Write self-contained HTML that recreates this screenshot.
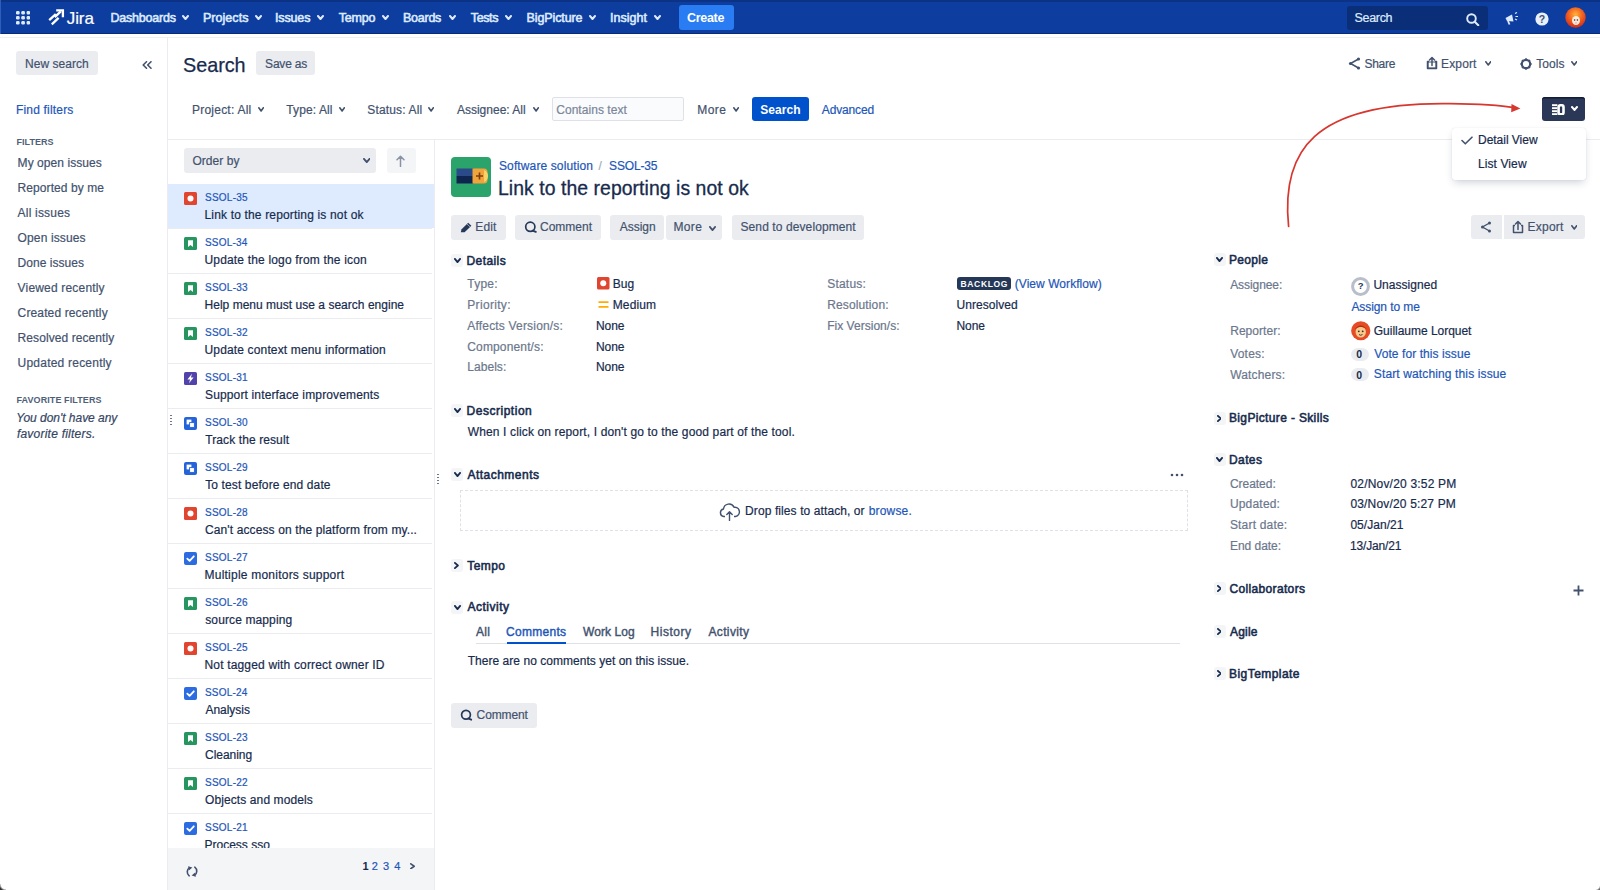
<!DOCTYPE html>
<html><head><meta charset="utf-8"><title>Jira</title>
<style>
html,body{margin:0;padding:0;width:1600px;height:890px;overflow:hidden;background:#fff;}
body{position:relative;font-family:"Liberation Sans", sans-serif;}
.t{position:absolute;white-space:nowrap;font-family:"Liberation Sans", sans-serif;-webkit-text-stroke:0.2px currentColor;}
.r{position:absolute;}
</style></head><body>
<div class="r" style="left:0px;top:0px;width:1600px;height:34px;background:#0D3E9F;"></div>
<div class="r" style="left:0px;top:0px;width:1600px;height:2px;background:#0C3286;"></div>
<div class="r" style="left:0px;top:33px;width:1600px;height:1px;background:#0A2A78;"></div>
<div class="r" style="left:0px;top:37px;width:1600px;height:1px;background:#EFF0F2;"></div>
<svg class="r" style="left:16px;top:10.5px;" width="14" height="14" viewBox="0 0 14 14"><rect x="0.0" y="0.0" width="3.6" height="3.4" rx="1.2" fill="#DEEBFF"/><rect x="5.3" y="0.0" width="3.6" height="3.4" rx="1.2" fill="#DEEBFF"/><rect x="10.6" y="0.0" width="3.6" height="3.4" rx="1.2" fill="#DEEBFF"/><rect x="0.0" y="5.0" width="3.6" height="3.4" rx="1.2" fill="#DEEBFF"/><rect x="5.3" y="5.0" width="3.6" height="3.4" rx="1.2" fill="#DEEBFF"/><rect x="10.6" y="5.0" width="3.6" height="3.4" rx="1.2" fill="#DEEBFF"/><rect x="0.0" y="10.0" width="3.6" height="3.4" rx="1.2" fill="#DEEBFF"/><rect x="5.3" y="10.0" width="3.6" height="3.4" rx="1.2" fill="#DEEBFF"/><rect x="10.6" y="10.0" width="3.6" height="3.4" rx="1.2" fill="#DEEBFF"/></svg>
<svg class="r" style="left:47.5px;top:9px;" width="17" height="17" viewBox="0 0 17 17"><g fill="none" stroke="#FFFFFF" stroke-width="2.3" stroke-linecap="butt"><path d="M1.2 11.2 L7.8 5.2"/><path d="M3.8 15.4 L10.6 8.8"/><path d="M8.2 1.3 H14.9 V8.2"/><path d="M6.8 8.2 L12.8 2.4"/></g></svg>
<span id="t0" class="t" style="left:66.75px;top:10.00px;font-size:17px;line-height:17px;color:#FFFFFF;letter-spacing:-0.083px;">Jira</span>
<span id="t1" class="t" style="left:110.50px;top:12.00px;font-size:12.5px;line-height:12.5px;color:#DEEBFF;-webkit-text-stroke:0.55px currentColor;letter-spacing:-0.211px;">Dashboards</span>
<svg class="r" style="left:182px;top:15px;" width="7" height="5" viewBox="0 0 7 5"><path d="M1.0 1.0 L3.5 4.0 L6.0 1.0" fill="none" stroke="#DEEBFF" stroke-width="2" stroke-linecap="round" stroke-linejoin="round"/></svg>
<span id="t2" class="t" style="left:203.00px;top:12.00px;font-size:12.5px;line-height:12.5px;color:#DEEBFF;-webkit-text-stroke:0.55px currentColor;letter-spacing:0.036px;">Projects</span>
<svg class="r" style="left:255px;top:15px;" width="7" height="5" viewBox="0 0 7 5"><path d="M1.0 1.0 L3.5 4.0 L6.0 1.0" fill="none" stroke="#DEEBFF" stroke-width="2" stroke-linecap="round" stroke-linejoin="round"/></svg>
<span id="t3" class="t" style="left:275.00px;top:12.00px;font-size:12.5px;line-height:12.5px;color:#DEEBFF;-webkit-text-stroke:0.55px currentColor;letter-spacing:-0.150px;">Issues</span>
<svg class="r" style="left:317px;top:15px;" width="7" height="5" viewBox="0 0 7 5"><path d="M1.0 1.0 L3.5 4.0 L6.0 1.0" fill="none" stroke="#DEEBFF" stroke-width="2" stroke-linecap="round" stroke-linejoin="round"/></svg>
<span id="t4" class="t" style="left:338.75px;top:12.00px;font-size:12.5px;line-height:12.5px;color:#DEEBFF;-webkit-text-stroke:0.55px currentColor;letter-spacing:-0.188px;">Tempo</span>
<svg class="r" style="left:382px;top:15px;" width="7" height="5" viewBox="0 0 7 5"><path d="M1.0 1.0 L3.5 4.0 L6.0 1.0" fill="none" stroke="#DEEBFF" stroke-width="2" stroke-linecap="round" stroke-linejoin="round"/></svg>
<span id="t5" class="t" style="left:403.00px;top:12.00px;font-size:12.5px;line-height:12.5px;color:#DEEBFF;-webkit-text-stroke:0.55px currentColor;letter-spacing:-0.250px;">Boards</span>
<svg class="r" style="left:449px;top:15px;" width="7" height="5" viewBox="0 0 7 5"><path d="M1.0 1.0 L3.5 4.0 L6.0 1.0" fill="none" stroke="#DEEBFF" stroke-width="2" stroke-linecap="round" stroke-linejoin="round"/></svg>
<span id="t6" class="t" style="left:470.75px;top:12.00px;font-size:12.5px;line-height:12.5px;color:#DEEBFF;-webkit-text-stroke:0.55px currentColor;letter-spacing:-0.375px;">Tests</span>
<svg class="r" style="left:505px;top:15px;" width="7" height="5" viewBox="0 0 7 5"><path d="M1.0 1.0 L3.5 4.0 L6.0 1.0" fill="none" stroke="#DEEBFF" stroke-width="2" stroke-linecap="round" stroke-linejoin="round"/></svg>
<span id="t7" class="t" style="left:526.50px;top:12.00px;font-size:12.5px;line-height:12.5px;color:#DEEBFF;-webkit-text-stroke:0.55px currentColor;letter-spacing:-0.111px;">BigPicture</span>
<svg class="r" style="left:589px;top:15px;" width="7" height="5" viewBox="0 0 7 5"><path d="M1.0 1.0 L3.5 4.0 L6.0 1.0" fill="none" stroke="#DEEBFF" stroke-width="2" stroke-linecap="round" stroke-linejoin="round"/></svg>
<span id="t8" class="t" style="left:610.00px;top:12.00px;font-size:12.5px;line-height:12.5px;color:#DEEBFF;-webkit-text-stroke:0.55px currentColor;letter-spacing:0.042px;">Insight</span>
<svg class="r" style="left:654px;top:15px;" width="7" height="5" viewBox="0 0 7 5"><path d="M1.0 1.0 L3.5 4.0 L6.0 1.0" fill="none" stroke="#DEEBFF" stroke-width="2" stroke-linecap="round" stroke-linejoin="round"/></svg>
<div class="r" style="left:679px;top:5px;width:55px;height:25px;background:#2A7CF2;border-radius:3px;"></div>
<span id="t9" class="t" style="left:687.00px;top:12.00px;font-size:12.5px;line-height:12.5px;color:#FFFFFF;font-weight:700;-webkit-text-stroke:0;letter-spacing:-0.300px;">Create</span>
<div class="r" style="left:1347px;top:5.5px;width:141px;height:24.5px;background:#0A2F78;border-radius:3px;"></div>
<span id="t10" class="t" style="left:1354.50px;top:12.00px;font-size:12.5px;line-height:12.5px;color:#DEEBFF;letter-spacing:-0.310px;">Search</span>
<svg class="r" style="left:1466px;top:13px;" width="14" height="13" viewBox="0 0 14 13"><circle cx="5.5" cy="5.5" r="4.3" fill="none" stroke="#DEEBFF" stroke-width="1.9"/><path d="M8.7 8.7 L12.3 12.3" stroke="#DEEBFF" stroke-width="2" stroke-linecap="round"/></svg>
<svg class="r" style="left:1504px;top:12px;" width="15" height="13" viewBox="0 0 15 13"><path d="M1.5 6 L8 2.5 L9.5 9.5 L3 9 Z" fill="#DEEBFF"/><path d="M4 9 L5.5 12.5" stroke="#DEEBFF" stroke-width="1.8"/><path d="M11 1.5 L13 0.5 M11.5 4.5 L14 4.5 M11 7 L13 8" stroke="#DEEBFF" stroke-width="1.2"/></svg>
<svg class="r" style="left:1534.5px;top:11.5px;" width="14" height="14" viewBox="0 0 14 14"><circle cx="7" cy="7" r="6.6" fill="#E6F0FF"/><text x="7" y="11" font-family="Liberation Sans" font-size="10.5" font-weight="700" text-anchor="middle" fill="#42526E">?</text></svg>
<svg class="r" style="left:1564.5px;top:7px;" width="21" height="21" viewBox="0 0 21 21"><defs><radialGradient id="av1" cx="0.5" cy="0.35" r="0.6"><stop offset="0" stop-color="#FFB43A"/><stop offset="0.55" stop-color="#F2641F"/><stop offset="1" stop-color="#D8351C"/></radialGradient></defs><circle cx="10.5" cy="10.5" r="10.2" fill="url(#av1)"/><ellipse cx="11" cy="13.5" rx="4" ry="4.6" fill="#FBE9DA"/><circle cx="9.6" cy="13" r="0.8" fill="#3A2A20"/><circle cx="12.4" cy="13" r="0.8" fill="#3A2A20"/><path d="M10.2 15.8 Q11 16.8 11.8 15.8" fill="#7A2A10"/></svg>
<div class="r" style="left:167px;top:38px;width:1px;height:852px;background:#EBECF0;"></div>
<div class="r" style="left:16px;top:51px;width:82px;height:24px;background:#EBECF0;border-radius:3px;"></div>
<span id="t11" class="t" style="left:25.00px;top:58.00px;font-size:12px;line-height:12px;color:#42526E;letter-spacing:0.028px;">New search</span>
<svg class="r" style="left:142px;top:61px;" width="10" height="8" viewBox="0 0 10 8"><path d="M4.5 0.8 L1.2 4 L4.5 7.2 M9 0.8 L5.7 4 L9 7.2" fill="none" stroke="#42526E" stroke-width="1.6" stroke-linecap="round" stroke-linejoin="round"/></svg>
<span id="t12" class="t" style="left:16.00px;top:104.00px;font-size:12px;line-height:12px;color:#1E56B8;letter-spacing:0.182px;">Find filters</span>
<span id="t13" class="t" style="left:16.50px;top:138.00px;font-size:9px;line-height:9px;color:#505F79;font-weight:700;-webkit-text-stroke:0;letter-spacing:0.033px;">FILTERS</span>
<span id="t14" class="t" style="left:17.60px;top:157.00px;font-size:12px;line-height:12px;color:#42526E;letter-spacing:0.062px;">My open issues</span>
<span id="t15" class="t" style="left:17.60px;top:182.00px;font-size:12px;line-height:12px;color:#42526E;letter-spacing:0.077px;">Reported by me</span>
<span id="t16" class="t" style="left:17.60px;top:207.00px;font-size:12px;line-height:12px;color:#42526E;letter-spacing:0.194px;">All issues</span>
<span id="t17" class="t" style="left:17.60px;top:232.00px;font-size:12px;line-height:12px;color:#42526E;letter-spacing:0.125px;">Open issues</span>
<span id="t18" class="t" style="left:17.60px;top:257.00px;font-size:12px;line-height:12px;color:#42526E;letter-spacing:0.025px;">Done issues</span>
<span id="t19" class="t" style="left:17.60px;top:282.00px;font-size:12px;line-height:12px;color:#42526E;letter-spacing:0.179px;">Viewed recently</span>
<span id="t20" class="t" style="left:17.60px;top:307.00px;font-size:12px;line-height:12px;color:#42526E;letter-spacing:0.133px;">Created recently</span>
<span id="t21" class="t" style="left:17.60px;top:332.00px;font-size:12px;line-height:12px;color:#42526E;letter-spacing:0.078px;">Resolved recently</span>
<span id="t22" class="t" style="left:17.60px;top:357.00px;font-size:12px;line-height:12px;color:#42526E;letter-spacing:0.217px;">Updated recently</span>
<span id="t23" class="t" style="left:16.50px;top:396.00px;font-size:9px;line-height:9px;color:#505F79;font-weight:700;-webkit-text-stroke:0;letter-spacing:0.087px;">FAVORITE FILTERS</span>
<span id="t24" class="t" style="left:16.15px;top:412.00px;font-size:12px;line-height:12px;color:#344563;font-style:italic;letter-spacing:-0.029px;">You don't have any</span>
<span id="t25" class="t" style="left:16.90px;top:428.00px;font-size:12px;line-height:12px;color:#344563;font-style:italic;letter-spacing:0.228px;">favorite filters.</span>
<div class="r" style="left:170.3px;top:415px;width:1.4px;height:1.4px;background:#6B778C;"></div>
<div class="r" style="left:170.3px;top:418px;width:1.4px;height:1.4px;background:#6B778C;"></div>
<div class="r" style="left:170.3px;top:421px;width:1.4px;height:1.4px;background:#6B778C;"></div>
<div class="r" style="left:170.3px;top:424px;width:1.4px;height:1.4px;background:#6B778C;"></div>
<span id="t26" class="t" style="left:183.00px;top:56.00px;font-size:19.8px;line-height:19.8px;color:#172B4D;letter-spacing:-0.020px;-webkit-text-stroke:0.25px #172B4D;">Search</span>
<div class="r" style="left:256px;top:51px;width:59px;height:24px;background:#EBECF0;border-radius:3px;"></div>
<span id="t27" class="t" style="left:265.10px;top:58.00px;font-size:12px;line-height:12px;color:#42526E;letter-spacing:-0.200px;">Save as</span>
<svg class="r" style="left:1348px;top:57px;" width="13" height="13" viewBox="0 0 13 13"><g fill="none" stroke="#42526E" stroke-width="1.5"><path d="M10.5 2 L2.5 6.5 L10.5 11"/></g><circle cx="10.5" cy="2" r="1.6" fill="#42526E"/><circle cx="2.5" cy="6.5" r="1.6" fill="#42526E"/><circle cx="10.5" cy="11" r="1.6" fill="#42526E"/></svg>
<span id="t28" class="t" style="left:1364.40px;top:58.00px;font-size:12px;line-height:12px;color:#42526E;letter-spacing:-0.250px;">Share</span>
<svg class="r" style="left:1426px;top:56px;" width="12" height="14" viewBox="0 0 12 14"><path d="M3 5.5 L1.5 5.5 L1.5 12.5 L10.5 12.5 L10.5 5.5 L9 5.5" fill="none" stroke="#42526E" stroke-width="1.5" stroke-linejoin="round"/><path d="M6 9.5 L6 1.5 M3.5 4 L6 1.5 L8.5 4" fill="none" stroke="#42526E" stroke-width="1.5" stroke-linecap="round" stroke-linejoin="round"/><path d="M2 6 L10 6 L10 12 L2 12Z" fill="none" stroke="#42526E" stroke-width="1.2"/></svg>
<span id="t29" class="t" style="left:1441.00px;top:58.00px;font-size:12px;line-height:12px;color:#42526E;letter-spacing:0.150px;">Export</span>
<svg class="r" style="left:1484.5px;top:61px;" width="6.5" height="4.8" viewBox="0 0 6.5 4.8"><path d="M0.8 0.8 L3.25 4.0 L5.7 0.8" fill="none" stroke="#42526E" stroke-width="1.6" stroke-linecap="round" stroke-linejoin="round"/></svg>
<svg class="r" style="left:1519.5px;top:58px;" width="12" height="12" viewBox="0 0 12 12"><circle cx="6" cy="6" r="4.2" fill="none" stroke="#42526E" stroke-width="2.2"/><g stroke="#42526E" stroke-width="1.6"><path d="M6 0.3 V2.5 M6 9.5 V11.7 M0.3 6 H2.5 M9.5 6 H11.7 M2 2 L3.4 3.4 M8.6 8.6 L10 10 M2 10 L3.4 8.6 M8.6 3.4 L10 2"/></g></svg>
<span id="t30" class="t" style="left:1536.35px;top:58.00px;font-size:12px;line-height:12px;color:#42526E;letter-spacing:0.013px;">Tools</span>
<svg class="r" style="left:1570.8px;top:61px;" width="6.5" height="4.8" viewBox="0 0 6.5 4.8"><path d="M0.8 0.8 L3.25 4.0 L5.7 0.8" fill="none" stroke="#42526E" stroke-width="1.6" stroke-linecap="round" stroke-linejoin="round"/></svg>
<span id="t31" class="t" style="left:191.90px;top:104.00px;font-size:12px;line-height:12px;color:#42526E;letter-spacing:0.245px;">Project: All</span>
<svg class="r" style="left:258px;top:107px;" width="6.2" height="4.8" viewBox="0 0 6.2 4.8"><path d="M0.8 0.8 L3.1 4.0 L5.4 0.8" fill="none" stroke="#42526E" stroke-width="1.6" stroke-linecap="round" stroke-linejoin="round"/></svg>
<span id="t32" class="t" style="left:286.35px;top:104.00px;font-size:12px;line-height:12px;color:#42526E;letter-spacing:0.094px;">Type: All</span>
<svg class="r" style="left:339px;top:107px;" width="6.2" height="4.8" viewBox="0 0 6.2 4.8"><path d="M0.8 0.8 L3.1 4.0 L5.4 0.8" fill="none" stroke="#42526E" stroke-width="1.6" stroke-linecap="round" stroke-linejoin="round"/></svg>
<span id="t33" class="t" style="left:367.30px;top:104.00px;font-size:12px;line-height:12px;color:#42526E;letter-spacing:0.145px;">Status: All</span>
<svg class="r" style="left:428px;top:107px;" width="6.2" height="4.8" viewBox="0 0 6.2 4.8"><path d="M0.8 0.8 L3.1 4.0 L5.4 0.8" fill="none" stroke="#42526E" stroke-width="1.6" stroke-linecap="round" stroke-linejoin="round"/></svg>
<span id="t34" class="t" style="left:456.90px;top:104.00px;font-size:12px;line-height:12px;color:#42526E;letter-spacing:0.008px;">Assignee: All</span>
<svg class="r" style="left:532.5px;top:107px;" width="6.2" height="4.8" viewBox="0 0 6.2 4.8"><path d="M0.8 0.8 L3.1 4.0 L5.4 0.8" fill="none" stroke="#42526E" stroke-width="1.6" stroke-linecap="round" stroke-linejoin="round"/></svg>
<div class="r" style="left:552px;top:97px;width:132px;height:24px;background:#FAFBFC;border:1px solid #DFE1E6;box-sizing:border-box;border-radius:2px;"></div>
<span id="t35" class="t" style="left:556.20px;top:104.00px;font-size:12px;line-height:12px;color:#7A869A;letter-spacing:0.050px;">Contains text</span>
<span id="t36" class="t" style="left:697.30px;top:104.00px;font-size:12px;line-height:12px;color:#42526E;letter-spacing:0.433px;">More</span>
<svg class="r" style="left:733px;top:107px;" width="6.2" height="4.8" viewBox="0 0 6.2 4.8"><path d="M0.8 0.8 L3.1 4.0 L5.4 0.8" fill="none" stroke="#42526E" stroke-width="1.6" stroke-linecap="round" stroke-linejoin="round"/></svg>
<div class="r" style="left:752px;top:97px;width:57px;height:24px;background:#0052CC;border-radius:3px;"></div>
<span id="t37" class="t" style="left:760.30px;top:104.00px;font-size:12px;line-height:12px;color:#FFFFFF;font-weight:700;-webkit-text-stroke:0;letter-spacing:0.050px;">Search</span>
<span id="t38" class="t" style="left:821.80px;top:104.00px;font-size:12px;line-height:12px;color:#1E56B8;letter-spacing:-0.150px;">Advanced</span>
<div class="r" style="left:168px;top:138.5px;width:1432px;height:1px;background:#EBECF0;"></div>
<div class="r" style="left:184px;top:148px;width:192px;height:24.5px;background:#EBECF0;border-radius:3px;"></div>
<span id="t39" class="t" style="left:192.40px;top:155.00px;font-size:12px;line-height:12px;color:#42526E;letter-spacing:0.064px;">Order by</span>
<svg class="r" style="left:362.5px;top:158px;" width="7.5" height="5" viewBox="0 0 7.5 5"><path d="M0.95 0.95 L3.75 4.05 L6.55 0.95" fill="none" stroke="#42526E" stroke-width="1.9" stroke-linecap="round" stroke-linejoin="round"/></svg>
<div class="r" style="left:386.5px;top:148px;width:29.5px;height:24.5px;background:#F4F5F7;border-radius:3px;"></div>
<svg class="r" style="left:396px;top:155px;" width="9" height="12" viewBox="0 0 9 12"><path d="M4.5 11.5 V1.5 M1 4.8 L4.5 1.3 L8 4.8" fill="none" stroke="#8993A4" stroke-width="1.5" stroke-linecap="round" stroke-linejoin="round"/></svg>
<div class="r" style="left:433.5px;top:139px;width:1px;height:751px;background:#EBECF0;"></div>
<div class="r" style="left:168px;top:183.9px;width:265.5px;height:44.1px;background:#DEEBFF;"></div>
<svg class="r" style="left:184px;top:192.1px;" width="13" height="13" viewBox="0 0 13 13"><rect x="0" y="0" width="13" height="13" rx="1.5" fill="#E2452F"/><circle cx="6.5" cy="6.5" r="3" fill="#fff"/></svg>
<span id="t40" class="t" style="left:205.00px;top:193.00px;font-size:10px;line-height:10px;color:#1E56B8;letter-spacing:0.242px;">SSOL-35</span>
<span id="t41" class="t" style="left:204.50px;top:209.00px;font-size:12px;line-height:12px;color:#172B4D;letter-spacing:0.163px;">Link to the reporting is not ok</span>
<div class="r" style="left:168px;top:228.4px;width:264px;height:1px;background:#EBECF0;"></div>
<svg class="r" style="left:184px;top:237.1px;" width="13" height="13" viewBox="0 0 13 13"><rect x="0" y="0" width="13" height="13" rx="1.5" fill="#27955F"/><path d="M4 3.2 H9 V10 L6.5 8 L4 10 Z" fill="#fff"/></svg>
<span id="t42" class="t" style="left:205.00px;top:238.00px;font-size:10px;line-height:10px;color:#1E56B8;letter-spacing:0.200px;">SSOL-34</span>
<span id="t43" class="t" style="left:204.50px;top:254.00px;font-size:12px;line-height:12px;color:#172B4D;letter-spacing:0.170px;">Update the logo from the icon</span>
<div class="r" style="left:168px;top:273.4px;width:264px;height:1px;background:#EBECF0;"></div>
<svg class="r" style="left:184px;top:282.1px;" width="13" height="13" viewBox="0 0 13 13"><rect x="0" y="0" width="13" height="13" rx="1.5" fill="#27955F"/><path d="M4 3.2 H9 V10 L6.5 8 L4 10 Z" fill="#fff"/></svg>
<span id="t44" class="t" style="left:205.00px;top:283.00px;font-size:10px;line-height:10px;color:#1E56B8;letter-spacing:0.242px;">SSOL-33</span>
<span id="t45" class="t" style="left:204.50px;top:299.00px;font-size:12px;line-height:12px;color:#172B4D;letter-spacing:0.023px;">Help menu must use a search engine</span>
<div class="r" style="left:168px;top:318.4px;width:264px;height:1px;background:#EBECF0;"></div>
<svg class="r" style="left:184px;top:327.1px;" width="13" height="13" viewBox="0 0 13 13"><rect x="0" y="0" width="13" height="13" rx="1.5" fill="#27955F"/><path d="M4 3.2 H9 V10 L6.5 8 L4 10 Z" fill="#fff"/></svg>
<span id="t46" class="t" style="left:205.00px;top:328.00px;font-size:10px;line-height:10px;color:#1E56B8;letter-spacing:0.242px;">SSOL-32</span>
<span id="t47" class="t" style="left:204.50px;top:344.00px;font-size:12px;line-height:12px;color:#172B4D;letter-spacing:0.150px;">Update context menu information</span>
<div class="r" style="left:168px;top:363.4px;width:264px;height:1px;background:#EBECF0;"></div>
<svg class="r" style="left:184px;top:372.1px;" width="13" height="13" viewBox="0 0 13 13"><rect x="0" y="0" width="13" height="13" rx="1.6" fill="#5243AA"/><path d="M8 1.8 L3.4 7.4 H6.1 L5 11.2 L9.6 5.6 H6.9 Z" fill="#fff"/></svg>
<span id="t48" class="t" style="left:205.00px;top:373.00px;font-size:10px;line-height:10px;color:#1E56B8;letter-spacing:0.242px;">SSOL-31</span>
<span id="t49" class="t" style="left:205.00px;top:389.00px;font-size:12px;line-height:12px;color:#172B4D;letter-spacing:0.147px;">Support interface improvements</span>
<div class="r" style="left:168px;top:408.4px;width:264px;height:1px;background:#EBECF0;"></div>
<svg class="r" style="left:184px;top:417.1px;" width="13" height="13" viewBox="0 0 13 13"><rect x="0" y="0" width="13" height="13" rx="2" fill="#2563D9"/><rect x="2.6" y="2.6" width="4.8" height="4.8" fill="#fff"/><rect x="5.6" y="5.6" width="4.8" height="4.8" fill="#fff" stroke="#2563D9" stroke-width="0.9"/></svg>
<span id="t50" class="t" style="left:205.00px;top:418.00px;font-size:10px;line-height:10px;color:#1E56B8;letter-spacing:0.242px;">SSOL-30</span>
<span id="t51" class="t" style="left:205.25px;top:434.00px;font-size:12px;line-height:12px;color:#172B4D;letter-spacing:0.100px;">Track the result</span>
<div class="r" style="left:168px;top:453.4px;width:264px;height:1px;background:#EBECF0;"></div>
<svg class="r" style="left:184px;top:462.1px;" width="13" height="13" viewBox="0 0 13 13"><rect x="0" y="0" width="13" height="13" rx="2" fill="#2563D9"/><rect x="2.6" y="2.6" width="4.8" height="4.8" fill="#fff"/><rect x="5.6" y="5.6" width="4.8" height="4.8" fill="#fff" stroke="#2563D9" stroke-width="0.9"/></svg>
<span id="t52" class="t" style="left:205.00px;top:463.00px;font-size:10px;line-height:10px;color:#1E56B8;letter-spacing:0.242px;">SSOL-29</span>
<span id="t53" class="t" style="left:205.25px;top:479.00px;font-size:12px;line-height:12px;color:#172B4D;letter-spacing:0.114px;">To test before end date</span>
<div class="r" style="left:168px;top:498.4px;width:264px;height:1px;background:#EBECF0;"></div>
<svg class="r" style="left:184px;top:507.1px;" width="13" height="13" viewBox="0 0 13 13"><rect x="0" y="0" width="13" height="13" rx="1.5" fill="#E2452F"/><circle cx="6.5" cy="6.5" r="3" fill="#fff"/></svg>
<span id="t54" class="t" style="left:205.00px;top:508.00px;font-size:10px;line-height:10px;color:#1E56B8;letter-spacing:0.242px;">SSOL-28</span>
<span id="t55" class="t" style="left:205.00px;top:524.00px;font-size:12px;line-height:12px;color:#172B4D;letter-spacing:0.118px;">Can't access on the platform from my...</span>
<div class="r" style="left:168px;top:543.4px;width:264px;height:1px;background:#EBECF0;"></div>
<svg class="r" style="left:184px;top:552.1px;" width="13" height="13" viewBox="0 0 13 13"><rect x="0" y="0" width="13" height="13" rx="2" fill="#2C6BE0"/><path d="M3.3 6.6 L5.6 8.9 L9.8 4.3" fill="none" stroke="#fff" stroke-width="1.8" stroke-linecap="round" stroke-linejoin="round"/></svg>
<span id="t56" class="t" style="left:205.00px;top:553.00px;font-size:10px;line-height:10px;color:#1E56B8;letter-spacing:0.242px;">SSOL-27</span>
<span id="t57" class="t" style="left:204.50px;top:569.00px;font-size:12px;line-height:12px;color:#172B4D;letter-spacing:0.229px;">Multiple monitors support</span>
<div class="r" style="left:168px;top:588.4px;width:264px;height:1px;background:#EBECF0;"></div>
<svg class="r" style="left:184px;top:597.1px;" width="13" height="13" viewBox="0 0 13 13"><rect x="0" y="0" width="13" height="13" rx="1.5" fill="#27955F"/><path d="M4 3.2 H9 V10 L6.5 8 L4 10 Z" fill="#fff"/></svg>
<span id="t58" class="t" style="left:205.00px;top:598.00px;font-size:10px;line-height:10px;color:#1E56B8;letter-spacing:0.242px;">SSOL-26</span>
<span id="t59" class="t" style="left:205.25px;top:614.00px;font-size:12px;line-height:12px;color:#172B4D;letter-spacing:0.115px;">source mapping</span>
<div class="r" style="left:168px;top:633.4px;width:264px;height:1px;background:#EBECF0;"></div>
<svg class="r" style="left:184px;top:642.1px;" width="13" height="13" viewBox="0 0 13 13"><rect x="0" y="0" width="13" height="13" rx="1.5" fill="#E2452F"/><circle cx="6.5" cy="6.5" r="3" fill="#fff"/></svg>
<span id="t60" class="t" style="left:205.00px;top:643.00px;font-size:10px;line-height:10px;color:#1E56B8;letter-spacing:0.242px;">SSOL-25</span>
<span id="t61" class="t" style="left:204.50px;top:659.00px;font-size:12px;line-height:12px;color:#172B4D;letter-spacing:0.169px;">Not tagged with correct owner ID</span>
<div class="r" style="left:168px;top:678.4px;width:264px;height:1px;background:#EBECF0;"></div>
<svg class="r" style="left:184px;top:687.1px;" width="13" height="13" viewBox="0 0 13 13"><rect x="0" y="0" width="13" height="13" rx="2" fill="#2C6BE0"/><path d="M3.3 6.6 L5.6 8.9 L9.8 4.3" fill="none" stroke="#fff" stroke-width="1.8" stroke-linecap="round" stroke-linejoin="round"/></svg>
<span id="t62" class="t" style="left:205.00px;top:688.00px;font-size:10px;line-height:10px;color:#1E56B8;letter-spacing:0.200px;">SSOL-24</span>
<span id="t63" class="t" style="left:205.50px;top:704.00px;font-size:12px;line-height:12px;color:#172B4D;letter-spacing:-0.036px;">Analysis</span>
<div class="r" style="left:168px;top:723.4px;width:264px;height:1px;background:#EBECF0;"></div>
<svg class="r" style="left:184px;top:732.1px;" width="13" height="13" viewBox="0 0 13 13"><rect x="0" y="0" width="13" height="13" rx="1.5" fill="#27955F"/><path d="M4 3.2 H9 V10 L6.5 8 L4 10 Z" fill="#fff"/></svg>
<span id="t64" class="t" style="left:205.00px;top:733.00px;font-size:10px;line-height:10px;color:#1E56B8;letter-spacing:0.242px;">SSOL-23</span>
<span id="t65" class="t" style="left:205.00px;top:749.00px;font-size:12px;line-height:12px;color:#172B4D;letter-spacing:-0.036px;">Cleaning</span>
<div class="r" style="left:168px;top:768.4px;width:264px;height:1px;background:#EBECF0;"></div>
<svg class="r" style="left:184px;top:777.1px;" width="13" height="13" viewBox="0 0 13 13"><rect x="0" y="0" width="13" height="13" rx="1.5" fill="#27955F"/><path d="M4 3.2 H9 V10 L6.5 8 L4 10 Z" fill="#fff"/></svg>
<span id="t66" class="t" style="left:205.00px;top:778.00px;font-size:10px;line-height:10px;color:#1E56B8;letter-spacing:0.242px;">SSOL-22</span>
<span id="t67" class="t" style="left:205.00px;top:794.00px;font-size:12px;line-height:12px;color:#172B4D;letter-spacing:0.103px;">Objects and models</span>
<div class="r" style="left:168px;top:813.4px;width:264px;height:1px;background:#EBECF0;"></div>
<svg class="r" style="left:184px;top:822.1px;" width="13" height="13" viewBox="0 0 13 13"><rect x="0" y="0" width="13" height="13" rx="2" fill="#2C6BE0"/><path d="M3.3 6.6 L5.6 8.9 L9.8 4.3" fill="none" stroke="#fff" stroke-width="1.8" stroke-linecap="round" stroke-linejoin="round"/></svg>
<span id="t68" class="t" style="left:205.00px;top:823.00px;font-size:10px;line-height:10px;color:#1E56B8;letter-spacing:0.242px;">SSOL-21</span>
<span id="t69" class="t" style="left:204.50px;top:839.00px;font-size:12px;line-height:12px;color:#172B4D;">Process sso</span>
<div class="r" style="left:168px;top:848.3px;width:265.5px;height:42px;background:#F4F5F7;"></div>
<svg class="r" style="left:184.5px;top:865px;" width="14" height="13" viewBox="0 0 14 13"><g fill="none" stroke="#42526E" stroke-width="1.6" stroke-linecap="round"><path d="M4.2 10.8 A5 5 0 0 1 4.6 2.6"/><path d="M9.8 2.2 A5 5 0 0 1 9.4 10.4"/></g><path d="M3 1.2 L7.4 2.6 L4.2 5.2Z M11 11.8 L6.6 10.4 L9.8 7.8Z" fill="#42526E"/></svg>
<span id="t70" class="t" style="left:362.55px;top:861.00px;font-size:11px;line-height:11px;color:#172B4D;font-weight:700;-webkit-text-stroke:0;letter-spacing:-0.800px;">1</span>
<span id="t71" class="t" style="left:371.70px;top:861.00px;font-size:11px;line-height:11px;color:#1E56B8;">2</span>
<span id="t72" class="t" style="left:383.10px;top:861.00px;font-size:11px;line-height:11px;color:#1E56B8;">3</span>
<span id="t73" class="t" style="left:394.25px;top:861.00px;font-size:11px;line-height:11px;color:#1E56B8;">4</span>
<svg class="r" style="left:409.5px;top:862.5px;" width="5" height="6.5" viewBox="0 0 5 6.5"><path d="M0.8 0.8 L4.2 3.25 L0.8 5.7" fill="none" stroke="#42526E" stroke-width="1.6" stroke-linecap="round" stroke-linejoin="round"/></svg>
<svg class="r" style="left:450.5px;top:157px;" width="40" height="40" viewBox="0 0 40 40"><rect x="0" y="0" width="40" height="40" rx="4" fill="#2AA46B"/><rect x="5.5" y="11.5" width="17" height="7.5" fill="#2A4A8A"/><rect x="5.5" y="19" width="17" height="7.5" fill="#0E2550"/><path d="M21.5 11.5 H33 A3.5 3.5 0 0 1 36.5 15 V23 A3.5 3.5 0 0 1 33 26.5 H21.5 Z" fill="#F2A33A"/><path d="M33 13 A6.5 6.5 0 0 1 33 25" fill="#F9D26B"/><path d="M28.5 15.5 V22.5 M25 19 H32" stroke="#7A3E10" stroke-width="1.6"/></svg>
<span id="t74" class="t" style="left:499.00px;top:160.00px;font-size:12px;line-height:12px;color:#1E56B8;letter-spacing:0.116px;">Software solution</span>
<span id="t75" class="t" style="left:598.50px;top:160.00px;font-size:12px;line-height:12px;color:#A5ADBA;">/</span>
<span id="t76" class="t" style="left:609.10px;top:160.00px;font-size:12px;line-height:12px;color:#1E56B8;letter-spacing:-0.183px;">SSOL-35</span>
<span id="t77" class="t" style="left:498.00px;top:179.00px;font-size:19.4px;line-height:19.4px;color:#172B4D;letter-spacing:0.058px;-webkit-text-stroke:0.3px #172B4D;">Link to the reporting is not ok</span>
<div class="r" style="left:450.6px;top:214.5px;width:55.4px;height:25.0px;background:#EBECF0;border-radius:3px;"></div>
<div class="r" style="left:515px;top:214.5px;width:85.6px;height:25.0px;background:#EBECF0;border-radius:3px;"></div>
<div class="r" style="left:610.2px;top:214.5px;width:53.5px;height:25.0px;background:#EBECF0;border-radius:3px;"></div>
<div class="r" style="left:665.9px;top:214.5px;width:56.3px;height:25.0px;background:#EBECF0;border-radius:3px;"></div>
<div class="r" style="left:731.5px;top:214.5px;width:132.5px;height:25.0px;background:#EBECF0;border-radius:3px;"></div>
<svg class="r" style="left:460px;top:221.5px;" width="13" height="11" viewBox="0 0 13 11"><path d="M0.8 10.2 L1.6 7.2 L8.2 0.8 L11.4 3.8 L4.6 10.2 Z" fill="#253858"/><path d="M7 2 L10.2 5" stroke="#EBECF0" stroke-width="0.6"/></svg>
<span id="t78" class="t" style="left:475.30px;top:221.00px;font-size:12px;line-height:12px;color:#42526E;letter-spacing:0.083px;">Edit</span>
<svg class="r" style="left:523.5px;top:220.5px;" width="14" height="12" viewBox="0 0 14 12"><circle cx="6.3" cy="5.8" r="4.6" fill="none" stroke="#253858" stroke-width="1.7"/><path d="M8.6 9.6 L11.8 10.9" stroke="#253858" stroke-width="1.8" stroke-linecap="round"/></svg>
<span id="t79" class="t" style="left:540.00px;top:221.00px;font-size:12px;line-height:12px;color:#42526E;">Comment</span>
<span id="t80" class="t" style="left:619.75px;top:221.00px;font-size:12px;line-height:12px;color:#42526E;letter-spacing:-0.040px;">Assign</span>
<span id="t81" class="t" style="left:673.40px;top:221.00px;font-size:12px;line-height:12px;color:#42526E;letter-spacing:0.400px;">More</span>
<svg class="r" style="left:708.8px;top:225.5px;" width="7" height="5" viewBox="0 0 7 5"><path d="M0.85 0.85 L3.5 4.15 L6.15 0.85" fill="none" stroke="#42526E" stroke-width="1.7" stroke-linecap="round" stroke-linejoin="round"/></svg>
<span id="t82" class="t" style="left:740.50px;top:221.00px;font-size:12px;line-height:12px;color:#42526E;letter-spacing:0.097px;">Send to development</span>
<div class="r" style="left:451.0px;top:253.60000000000002px;width:12px;height:13px;background:#F4F5F7;border-radius:3px;"></div>
<svg class="r" style="left:453.5px;top:257.6px;" width="7" height="5" viewBox="0 0 7 5"><path d="M0.9 0.9 L3.5 4.1 L6.1 0.9" fill="none" stroke="#172B4D" stroke-width="1.8" stroke-linecap="round" stroke-linejoin="round"/></svg>
<span id="t83" class="t" style="left:466.50px;top:255.00px;font-size:12px;line-height:12px;color:#172B4D;-webkit-text-stroke:0.55px currentColor;letter-spacing:0.408px;">Details</span>
<span id="t84" class="t" style="left:467.30px;top:278.00px;font-size:12px;line-height:12px;color:#6B778C;letter-spacing:0.212px;">Type:</span>
<span id="t85" class="t" style="left:467.30px;top:299.00px;font-size:12px;line-height:12px;color:#6B778C;letter-spacing:0.312px;">Priority:</span>
<span id="t86" class="t" style="left:467.30px;top:320.00px;font-size:12px;line-height:12px;color:#6B778C;letter-spacing:0.182px;">Affects Version/s:</span>
<span id="t87" class="t" style="left:467.30px;top:341.00px;font-size:12px;line-height:12px;color:#6B778C;letter-spacing:0.141px;">Component/s:</span>
<span id="t88" class="t" style="left:467.30px;top:361.00px;font-size:12px;line-height:12px;color:#6B778C;letter-spacing:0.042px;">Labels:</span>
<svg class="r" style="left:597px;top:277.2px;" width="12.5" height="12.5" viewBox="0 0 12.5 12.5"><rect x="0" y="0" width="12.5" height="12.5" rx="1.5" fill="#E2452F"/><circle cx="6.25" cy="6.25" r="3" fill="#fff"/></svg>
<span id="t89" class="t" style="left:612.70px;top:278.00px;font-size:12px;line-height:12px;color:#172B4D;letter-spacing:0.025px;">Bug</span>
<svg class="r" style="left:597.5px;top:301px;" width="11" height="7" viewBox="0 0 11 7"><path d="M0.5 1.2 H10.5 M0.5 5.8 H10.5" stroke="#FFAB00" stroke-width="1.7"/></svg>
<span id="t90" class="t" style="left:612.70px;top:299.00px;font-size:12px;line-height:12px;color:#172B4D;letter-spacing:0.140px;">Medium</span>
<span id="t91" class="t" style="left:596.00px;top:320.00px;font-size:12px;line-height:12px;color:#172B4D;letter-spacing:-0.083px;">None</span>
<span id="t92" class="t" style="left:596.00px;top:341.00px;font-size:12px;line-height:12px;color:#172B4D;letter-spacing:-0.083px;">None</span>
<span id="t93" class="t" style="left:596.00px;top:361.00px;font-size:12px;line-height:12px;color:#172B4D;letter-spacing:-0.083px;">None</span>
<span id="t94" class="t" style="left:827.20px;top:278.00px;font-size:12px;line-height:12px;color:#6B778C;letter-spacing:0.225px;">Status:</span>
<span id="t95" class="t" style="left:827.20px;top:299.00px;font-size:12px;line-height:12px;color:#6B778C;letter-spacing:0.130px;">Resolution:</span>
<span id="t96" class="t" style="left:827.20px;top:320.00px;font-size:12px;line-height:12px;color:#6B778C;letter-spacing:0.023px;">Fix Version/s:</span>
<div class="r" style="left:957px;top:277px;width:53.7px;height:12.5px;background:#253858;border-radius:3px;"></div>
<span id="t97" class="t" style="left:960.50px;top:280.00px;font-size:8.5px;line-height:8.5px;color:#FFFFFF;font-weight:700;-webkit-text-stroke:0;letter-spacing:0.667px;">BACKLOG</span>
<span id="t98" class="t" style="left:1014.75px;top:278.00px;font-size:12px;line-height:12px;color:#1E56B8;letter-spacing:0.054px;">(View Workflow)</span>
<span id="t99" class="t" style="left:956.50px;top:299.00px;font-size:12px;line-height:12px;color:#172B4D;letter-spacing:0.056px;">Unresolved</span>
<span id="t100" class="t" style="left:956.50px;top:320.00px;font-size:12px;line-height:12px;color:#172B4D;letter-spacing:-0.083px;">None</span>
<div class="r" style="left:451.0px;top:403.9px;width:12px;height:13px;background:#F4F5F7;border-radius:3px;"></div>
<svg class="r" style="left:453.5px;top:407.9px;" width="7" height="5" viewBox="0 0 7 5"><path d="M0.9 0.9 L3.5 4.1 L6.1 0.9" fill="none" stroke="#172B4D" stroke-width="1.8" stroke-linecap="round" stroke-linejoin="round"/></svg>
<span id="t101" class="t" style="left:466.50px;top:405.00px;font-size:12px;line-height:12px;color:#172B4D;-webkit-text-stroke:0.55px currentColor;letter-spacing:0.525px;">Description</span>
<span id="t102" class="t" style="left:467.75px;top:426.00px;font-size:12px;line-height:12px;color:#172B4D;letter-spacing:0.136px;">When I click on report, I don't go to the good part of the tool.</span>
<div class="r" style="left:451.0px;top:468.0px;width:12px;height:13px;background:#F4F5F7;border-radius:3px;"></div>
<svg class="r" style="left:453.5px;top:472.0px;" width="7" height="5" viewBox="0 0 7 5"><path d="M0.9 0.9 L3.5 4.1 L6.1 0.9" fill="none" stroke="#172B4D" stroke-width="1.8" stroke-linecap="round" stroke-linejoin="round"/></svg>
<span id="t103" class="t" style="left:467.50px;top:469.00px;font-size:12px;line-height:12px;color:#172B4D;-webkit-text-stroke:0.55px currentColor;letter-spacing:0.475px;">Attachments</span>
<svg class="r" style="left:1170px;top:473px;" width="14" height="4" viewBox="0 0 14 4"><circle cx="2" cy="2" r="1.3" fill="#42526E"/><circle cx="7" cy="2" r="1.3" fill="#42526E"/><circle cx="12" cy="2" r="1.3" fill="#42526E"/></svg>
<div class="r" style="left:459.5px;top:490px;width:728.5px;height:40.5px;background:transparent;border:1px dashed #DFE1E6;box-sizing:border-box;"></div>
<svg class="r" style="left:719px;top:501.5px;" width="22" height="19" viewBox="0 0 22 19"><path d="M6 14.5 H4.8 A3.8 3.8 0 0 1 4.5 7 A5.5 5.5 0 0 1 15 5.3 A4.5 4.5 0 0 1 16.5 14.5 H15" fill="none" stroke="#42526E" stroke-width="1.4" stroke-linejoin="round"/><path d="M10.5 18.5 V10 M7.8 12.5 L10.5 9.8 L13.2 12.5" fill="none" stroke="#42526E" stroke-width="1.4" stroke-linecap="round" stroke-linejoin="round"/></svg>
<span id="t104" class="t" style="left:745.10px;top:505.00px;font-size:12px;line-height:12px;color:#172B4D;letter-spacing:0.093px;">Drop files to attach, or</span>
<span id="t105" class="t" style="left:868.65px;top:505.00px;font-size:12px;line-height:12px;color:#1E56B8;letter-spacing:0.192px;">browse.</span>
<div class="r" style="left:437.3px;top:473.5px;width:1.4px;height:1.4px;background:#6B778C;"></div>
<div class="r" style="left:437.3px;top:476.5px;width:1.4px;height:1.4px;background:#6B778C;"></div>
<div class="r" style="left:437.3px;top:479.5px;width:1.4px;height:1.4px;background:#6B778C;"></div>
<div class="r" style="left:437.3px;top:482.5px;width:1.4px;height:1.4px;background:#6B778C;"></div>
<div class="r" style="left:451.0px;top:559.1px;width:12px;height:13px;background:#F4F5F7;border-radius:3px;"></div>
<svg class="r" style="left:454.2px;top:562.1px;" width="4.8" height="7" viewBox="0 0 4.8 7"><path d="M0.9 0.9 L3.9 3.5 L0.9 6.1" fill="none" stroke="#172B4D" stroke-width="1.8" stroke-linecap="round" stroke-linejoin="round"/></svg>
<span id="t106" class="t" style="left:467.25px;top:560.00px;font-size:12px;line-height:12px;color:#172B4D;-webkit-text-stroke:0.55px currentColor;letter-spacing:0.412px;">Tempo</span>
<div class="r" style="left:451.0px;top:600.5px;width:12px;height:13px;background:#F4F5F7;border-radius:3px;"></div>
<svg class="r" style="left:453.5px;top:604.5px;" width="7" height="5" viewBox="0 0 7 5"><path d="M0.9 0.9 L3.5 4.1 L6.1 0.9" fill="none" stroke="#172B4D" stroke-width="1.8" stroke-linecap="round" stroke-linejoin="round"/></svg>
<span id="t107" class="t" style="left:467.50px;top:601.00px;font-size:12px;line-height:12px;color:#172B4D;-webkit-text-stroke:0.55px currentColor;letter-spacing:0.500px;">Activity</span>
<div class="r" style="left:476px;top:642.5px;width:704px;height:1.2px;background:#DFE1E6;"></div>
<span id="t108" class="t" style="left:476.00px;top:626.00px;font-size:12px;line-height:12px;color:#42526E;-webkit-text-stroke:0.4px currentColor;letter-spacing:0.250px;">All</span>
<span id="t109" class="t" style="left:506.10px;top:626.00px;font-size:12px;line-height:12px;color:#1E56B8;-webkit-text-stroke:0.4px currentColor;letter-spacing:0.286px;">Comments</span>
<span id="t110" class="t" style="left:583.00px;top:626.00px;font-size:12px;line-height:12px;color:#42526E;-webkit-text-stroke:0.4px currentColor;letter-spacing:0.071px;">Work Log</span>
<span id="t111" class="t" style="left:650.60px;top:626.00px;font-size:12px;line-height:12px;color:#42526E;-webkit-text-stroke:0.4px currentColor;letter-spacing:0.525px;">History</span>
<span id="t112" class="t" style="left:708.40px;top:626.00px;font-size:12px;line-height:12px;color:#42526E;-webkit-text-stroke:0.4px currentColor;letter-spacing:0.371px;">Activity</span>
<div class="r" style="left:506.6px;top:641.5px;width:59px;height:2.2px;background:#0052CC;"></div>
<span id="t113" class="t" style="left:467.75px;top:655.00px;font-size:12px;line-height:12px;color:#172B4D;letter-spacing:0.032px;">There are no comments yet on this issue.</span>
<div class="r" style="left:451.2px;top:702.5px;width:86px;height:25px;background:#EBECF0;border-radius:3px;"></div>
<svg class="r" style="left:459.5px;top:708.5px;" width="14" height="12" viewBox="0 0 14 12"><circle cx="6" cy="5.8" r="4.4" fill="none" stroke="#253858" stroke-width="1.7"/><path d="M8.2 9.4 L11.2 10.7" stroke="#253858" stroke-width="1.8" stroke-linecap="round"/></svg>
<span id="t114" class="t" style="left:476.60px;top:709.00px;font-size:12px;line-height:12px;color:#42526E;letter-spacing:-0.133px;">Comment</span>
<div class="r" style="left:1471px;top:214.8px;width:30.5px;height:24.5px;background:#EBECF0;border-radius:3px 0 0 3px;"></div>
<svg class="r" style="left:1480px;top:221px;" width="12" height="12" viewBox="0 0 12 12"><g fill="none" stroke="#42526E" stroke-width="1.4"><path d="M9.5 2 L2.5 6 L9.5 10"/></g><circle cx="9.5" cy="2" r="1.5" fill="#42526E"/><circle cx="2.5" cy="6" r="1.5" fill="#42526E"/><circle cx="9.5" cy="10" r="1.5" fill="#42526E"/></svg>
<div class="r" style="left:1503.5px;top:214.8px;width:81.5px;height:24.5px;background:#EBECF0;border-radius:0 3px 3px 0;"></div>
<svg class="r" style="left:1512px;top:219.5px;" width="12" height="14" viewBox="0 0 12 14"><path d="M3 5.5 L1.5 5.5 L1.5 12.5 L10.5 12.5 L10.5 5.5 L9 5.5" fill="none" stroke="#42526E" stroke-width="1.5" stroke-linejoin="round"/><path d="M6 9.5 L6 1.5 M3.5 4 L6 1.5 L8.5 4" fill="none" stroke="#42526E" stroke-width="1.5" stroke-linecap="round" stroke-linejoin="round"/></svg>
<span id="t115" class="t" style="left:1527.50px;top:221.00px;font-size:12px;line-height:12px;color:#42526E;letter-spacing:0.250px;">Export</span>
<svg class="r" style="left:1570.5px;top:225px;" width="6.5" height="4.8" viewBox="0 0 6.5 4.8"><path d="M0.8 0.8 L3.25 4.0 L5.7 0.8" fill="none" stroke="#42526E" stroke-width="1.6" stroke-linecap="round" stroke-linejoin="round"/></svg>
<div class="r" style="left:1213.5px;top:253.3px;width:12px;height:13px;background:#F4F5F7;border-radius:3px;"></div>
<svg class="r" style="left:1216px;top:257.3px;" width="7" height="5" viewBox="0 0 7 5"><path d="M0.9 0.9 L3.5 4.1 L6.1 0.9" fill="none" stroke="#172B4D" stroke-width="1.8" stroke-linecap="round" stroke-linejoin="round"/></svg>
<span id="t116" class="t" style="left:1229.00px;top:254.00px;font-size:12px;line-height:12px;color:#172B4D;-webkit-text-stroke:0.55px currentColor;letter-spacing:0.320px;">People</span>
<span id="t117" class="t" style="left:1230.20px;top:279.00px;font-size:12px;line-height:12px;color:#6B778C;letter-spacing:-0.081px;">Assignee:</span>
<svg class="r" style="left:1351px;top:276.5px;" width="19" height="19" viewBox="0 0 19 19"><circle cx="9.5" cy="9.5" r="7.9" fill="#fff" stroke="#B8BFCA" stroke-width="3"/><text x="9.6" y="12.2" font-family="Liberation Sans" font-size="9.5" font-weight="700" text-anchor="middle" fill="#253858">?</text></svg>
<span id="t118" class="t" style="left:1373.40px;top:279.00px;font-size:12px;line-height:12px;color:#172B4D;letter-spacing:0.039px;">Unassigned</span>
<span id="t119" class="t" style="left:1351.40px;top:301.00px;font-size:12px;line-height:12px;color:#1E56B8;letter-spacing:-0.082px;">Assign to me</span>
<span id="t120" class="t" style="left:1230.20px;top:325.00px;font-size:12px;line-height:12px;color:#6B778C;letter-spacing:0.037px;">Reporter:</span>
<svg class="r" style="left:1351px;top:321px;" width="19.5" height="19.5" viewBox="0 0 19.5 19.5"><circle cx="9.75" cy="9.75" r="9.6" fill="#E54B25"/><ellipse cx="9.75" cy="11" rx="5.2" ry="5.6" fill="#F7C98D"/><path d="M3.5 8.5 Q9.75 0.5 16 8.5 Q13 5.5 9.75 6 Q6.5 5.5 3.5 8.5Z" fill="#B52A12"/><circle cx="7.8" cy="10.3" r="0.9" fill="#3A2A20"/><circle cx="11.7" cy="10.3" r="0.9" fill="#3A2A20"/><path d="M8 13.5 Q9.75 15 11.5 13.5" fill="none" stroke="#3A2A20" stroke-width="0.9"/></svg>
<span id="t121" class="t" style="left:1373.80px;top:325.00px;font-size:12px;line-height:12px;color:#172B4D;letter-spacing:-0.025px;">Guillaume Lorquet</span>
<span id="t122" class="t" style="left:1230.20px;top:348.00px;font-size:12px;line-height:12px;color:#6B778C;letter-spacing:0.210px;">Votes:</span>
<div class="r" style="left:1351.2px;top:347.5px;width:17.5px;height:13px;background:#EBECF0;border-radius:7px;"></div>
<span id="t123" class="t" style="left:1356.35px;top:349.00px;font-size:10.5px;line-height:10.5px;color:#172B4D;font-weight:700;-webkit-text-stroke:0;">0</span>
<span id="t124" class="t" style="left:1374.30px;top:348.00px;font-size:12px;line-height:12px;color:#1E56B8;letter-spacing:0.075px;">Vote for this issue</span>
<span id="t125" class="t" style="left:1230.20px;top:369.00px;font-size:12px;line-height:12px;color:#6B778C;letter-spacing:0.162px;">Watchers:</span>
<div class="r" style="left:1351.2px;top:368px;width:17.5px;height:13px;background:#EBECF0;border-radius:7px;"></div>
<span id="t126" class="t" style="left:1356.35px;top:370.00px;font-size:10.5px;line-height:10.5px;color:#172B4D;font-weight:700;-webkit-text-stroke:0;">0</span>
<span id="t127" class="t" style="left:1373.80px;top:368.00px;font-size:12px;line-height:12px;color:#1E56B8;letter-spacing:0.129px;">Start watching this issue</span>
<div class="r" style="left:1213.5px;top:411.5px;width:12px;height:13px;background:#F4F5F7;border-radius:3px;"></div>
<svg class="r" style="left:1216.7px;top:414.5px;" width="4.8" height="7" viewBox="0 0 4.8 7"><path d="M0.9 0.9 L3.9 3.5 L0.9 6.1" fill="none" stroke="#172B4D" stroke-width="1.8" stroke-linecap="round" stroke-linejoin="round"/></svg>
<span id="t128" class="t" style="left:1229.00px;top:412.00px;font-size:12px;line-height:12px;color:#172B4D;-webkit-text-stroke:0.55px currentColor;letter-spacing:0.350px;">BigPicture - Skills</span>
<div class="r" style="left:1213.5px;top:452.9px;width:12px;height:13px;background:#F4F5F7;border-radius:3px;"></div>
<svg class="r" style="left:1216px;top:456.9px;" width="7" height="5" viewBox="0 0 7 5"><path d="M0.9 0.9 L3.5 4.1 L6.1 0.9" fill="none" stroke="#172B4D" stroke-width="1.8" stroke-linecap="round" stroke-linejoin="round"/></svg>
<span id="t129" class="t" style="left:1229.00px;top:454.00px;font-size:12px;line-height:12px;color:#172B4D;-webkit-text-stroke:0.55px currentColor;letter-spacing:0.400px;">Dates</span>
<span id="t130" class="t" style="left:1229.90px;top:478.00px;font-size:12px;line-height:12px;color:#6B778C;letter-spacing:-0.029px;">Created:</span>
<span id="t131" class="t" style="left:1350.40px;top:478.00px;font-size:12px;line-height:12px;color:#172B4D;letter-spacing:0.197px;">02/Nov/20 3:52 PM</span>
<span id="t132" class="t" style="left:1229.90px;top:498.00px;font-size:12px;line-height:12px;color:#6B778C;letter-spacing:0.193px;">Updated:</span>
<span id="t133" class="t" style="left:1350.40px;top:498.00px;font-size:12px;line-height:12px;color:#172B4D;letter-spacing:0.172px;">03/Nov/20 5:27 PM</span>
<span id="t134" class="t" style="left:1229.90px;top:519.00px;font-size:12px;line-height:12px;color:#6B778C;letter-spacing:0.185px;">Start date:</span>
<span id="t135" class="t" style="left:1350.40px;top:519.00px;font-size:12px;line-height:12px;color:#172B4D;letter-spacing:0.044px;">05/Jan/21</span>
<span id="t136" class="t" style="left:1229.90px;top:540.00px;font-size:12px;line-height:12px;color:#6B778C;letter-spacing:-0.019px;">End date:</span>
<span id="t137" class="t" style="left:1349.90px;top:540.00px;font-size:12px;line-height:12px;color:#172B4D;letter-spacing:-0.144px;">13/Jan/21</span>
<div class="r" style="left:1213.5px;top:582.0px;width:12px;height:13px;background:#F4F5F7;border-radius:3px;"></div>
<svg class="r" style="left:1216.7px;top:585.0px;" width="4.8" height="7" viewBox="0 0 4.8 7"><path d="M0.9 0.9 L3.9 3.5 L0.9 6.1" fill="none" stroke="#172B4D" stroke-width="1.8" stroke-linecap="round" stroke-linejoin="round"/></svg>
<span id="t138" class="t" style="left:1229.50px;top:583.00px;font-size:12px;line-height:12px;color:#172B4D;-webkit-text-stroke:0.55px currentColor;letter-spacing:0.342px;">Collaborators</span>
<svg class="r" style="left:1573px;top:584.5px;" width="11" height="11" viewBox="0 0 11 11"><path d="M5.5 0.5 V10.5 M0.5 5.5 H10.5" stroke="#42526E" stroke-width="1.8"/></svg>
<div class="r" style="left:1213.5px;top:625.3px;width:12px;height:13px;background:#F4F5F7;border-radius:3px;"></div>
<svg class="r" style="left:1216.7px;top:628.3px;" width="4.8" height="7" viewBox="0 0 4.8 7"><path d="M0.9 0.9 L3.9 3.5 L0.9 6.1" fill="none" stroke="#172B4D" stroke-width="1.8" stroke-linecap="round" stroke-linejoin="round"/></svg>
<span id="t139" class="t" style="left:1230.00px;top:626.00px;font-size:12px;line-height:12px;color:#172B4D;-webkit-text-stroke:0.55px currentColor;letter-spacing:0.188px;">Agile</span>
<div class="r" style="left:1213.5px;top:666.7px;width:12px;height:13px;background:#F4F5F7;border-radius:3px;"></div>
<svg class="r" style="left:1216.7px;top:669.7px;" width="4.8" height="7" viewBox="0 0 4.8 7"><path d="M0.9 0.9 L3.9 3.5 L0.9 6.1" fill="none" stroke="#172B4D" stroke-width="1.8" stroke-linecap="round" stroke-linejoin="round"/></svg>
<span id="t140" class="t" style="left:1229.00px;top:668.00px;font-size:12px;line-height:12px;color:#172B4D;-webkit-text-stroke:0.55px currentColor;letter-spacing:0.450px;">BigTemplate</span>
<div class="r" style="left:1542px;top:97px;width:43px;height:24px;background:#2A3756;border-radius:3px;box-shadow:inset 0 1.5px 0 #131D36;"></div>
<svg class="r" style="left:1551.5px;top:103.5px;" width="13" height="11.5" viewBox="0 0 13 11.5"><g fill="#fff"><rect x="0" y="0.2" width="5.4" height="1.9"/><rect x="0" y="3.2" width="5.4" height="1.9"/><rect x="0" y="6.2" width="5.4" height="1.9"/><rect x="0" y="9.2" width="5.4" height="1.9"/></g><rect x="6.6" y="1.3" width="4.9" height="8.9" rx="1.6" fill="none" stroke="#fff" stroke-width="2.6"/></svg>
<svg class="r" style="left:1570.8px;top:106.3px;" width="7" height="5" viewBox="0 0 7 5"><path d="M1.1 1.1 L3.5 3.9 L5.9 1.1" fill="none" stroke="#FFFFFF" stroke-width="2.2" stroke-linecap="round" stroke-linejoin="round"/></svg>
<div class="r" style="left:1451.5px;top:127.5px;width:134px;height:52.5px;background:#FFFFFF;border-radius:3px;box-shadow:0 4px 8px -2px rgba(9,30,66,0.22),0 0 1px rgba(9,30,66,0.18);"></div>
<svg class="r" style="left:1460.5px;top:135.5px;" width="12" height="9" viewBox="0 0 12 9"><path d="M1 4.5 L4.3 7.8 L11 1.2" fill="none" stroke="#42526E" stroke-width="1.6" stroke-linecap="round" stroke-linejoin="round"/></svg>
<span id="t141" class="t" style="left:1478.00px;top:134.00px;font-size:12px;line-height:12px;color:#172B4D;letter-spacing:-0.025px;">Detail View</span>
<span id="t142" class="t" style="left:1478.00px;top:158.00px;font-size:12px;line-height:12px;color:#172B4D;letter-spacing:0.094px;">List View</span>
<svg class="r" style="left:1270px;top:90px;" width="260" height="145" viewBox="0 0 260 145"><path d="M18.6 136.5 C11 62 42 11.5 180 13.6 C215 14 235 16 244 17.6" fill="none" stroke="#D8372F" stroke-width="1.7" stroke-linecap="round"/><path d="M250.4 18.4 L241.5 14 L241.2 22.3 Z" fill="#D8372F"/></svg>
<div class="r" style="left:0px;top:884px;width:6px;height:6px;background:radial-gradient(circle at 6px 0px, rgba(0,0,0,0) 5px, rgba(0,0,0,0.8) 7px);"></div>
<div class="r" style="left:1595px;top:885px;width:5px;height:5px;background:radial-gradient(circle at 0px 0px, rgba(0,0,0,0) 4.5px, rgba(0,0,0,0.6) 6px);"></div>
<div class="r" style="left:0px;top:0px;width:1px;height:34px;background:#2F5EB8;"></div>
</body></html>
